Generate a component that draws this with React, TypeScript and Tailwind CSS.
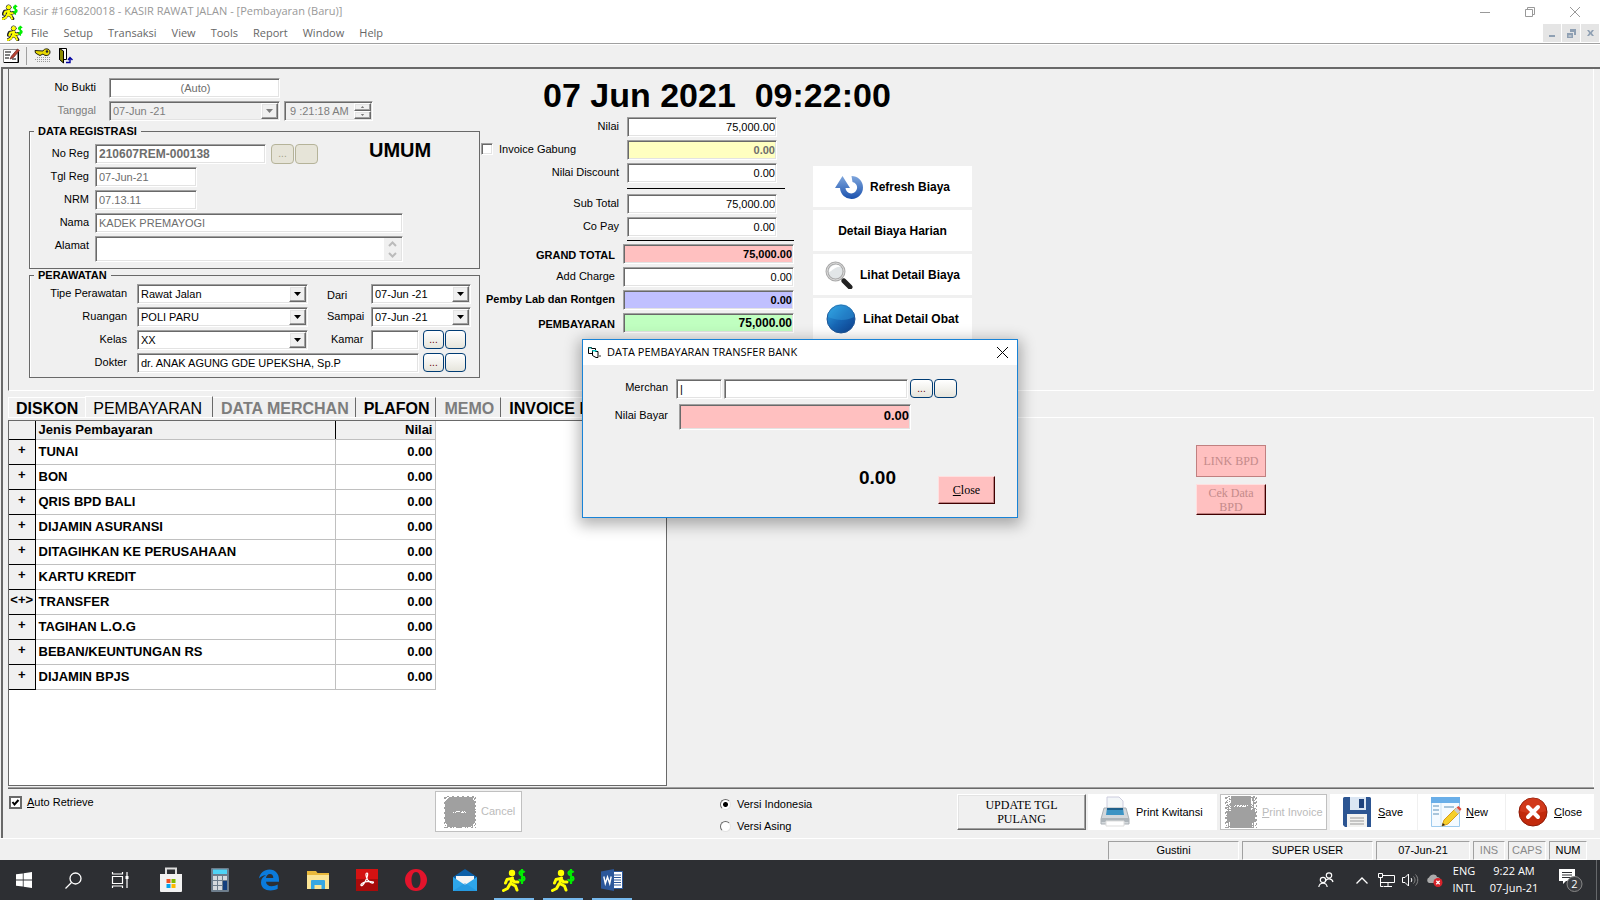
import type { ReactNode } from "react";

const SUNKEN =
  "border border-t-[#a0a0a0] border-l-[#a0a0a0] border-r-white border-b-white shadow-[inset_1px_1px_0_#696969,inset_-1px_-1px_0_#e3e3e3]";
const RAISED =
  "border border-t-white border-l-white border-r-[#696969] border-b-[#696969] shadow-[inset_-1px_-1px_0_#a0a0a0,inset_1px_1px_0_#e3e3e3] bg-[#f0f0f0]";
const XP =
  "h-[19px] rounded-[4px] border border-[#003c74] bg-gradient-to-b from-white to-[#e6e5dc] text-[10px] leading-4 text-[#600]";
const XP_OFF = "h-5 rounded-[4px] border border-[#b5b399] bg-[#e6e4d8] text-[10px] leading-4 text-[#a19f88]";

type FieldProps = { id: string; value?: string; className?: string; disabled?: boolean; label?: string };

function Field({ id, value = "", className = "", disabled, label }: FieldProps) {
  return (
    <input
      id={id}
      aria-label={label}
      defaultValue={value}
      disabled={disabled}
      className={`h-5 min-w-0 pl-[3px] pr-px outline-none disabled:text-[#6d6d6d] ${SUNKEN} ${className}`}
    />
  );
}

function Arrow({ up, className = "" }: { up?: boolean; className?: string }) {
  return (
    <svg viewBox="0 0 7 4" className={`h-1 w-[7px] ${className}`} fill="currentColor">
      <path d={up ? "M0 4h7L3.5 0z" : "M0 0h7L3.5 4z"} />
    </svg>
  );
}

function Combo({ id, value }: { id: string; value: string }) {
  return (
    <div className={`flex h-5 w-[171px] items-center bg-white p-px ${SUNKEN}`}>
      <select id={id} className="min-w-0 flex-1 appearance-none px-[2px] outline-none">
        <option>{value}</option>
      </select>
      <span className={`flex h-4 w-[17px] items-center justify-center ${RAISED}`}>
        <Arrow />
      </span>
    </div>
  );
}

function DatePick({ id, value, className, disabled }: FieldProps) {
  return (
    <div className={`flex h-5 items-center p-px ${SUNKEN} ${disabled ? "text-[#7d7d7d]" : "bg-white"} ${className}`}>
      <input id={id} defaultValue={value} disabled={disabled} className="min-w-0 flex-1 px-[2px] outline-none" />
      <button aria-label="Pilih tanggal" disabled={disabled} className={`flex h-4 w-[17px] items-center justify-center ${RAISED}`}>
        <Arrow />
      </button>
    </div>
  );
}

function Row({ id, label, width, gap, children, className = "" }: { id: string; label: string; width: string; gap: string; children: ReactNode; className?: string }) {
  return (
    <div className={`flex items-start ${gap}`}>
      <label htmlFor={id} className={`shrink-0 text-right leading-[18px] ${width} ${className}`}>
        {label}
      </label>
      {children}
    </div>
  );
}

function Runner({ className = "", outline = false }: { className?: string; outline?: boolean }) {
  return (
    <svg viewBox="0 0 24 24" className={className}>
      {outline && (
        <g stroke="#222" fill="none" strokeLinecap="round" strokeLinejoin="round">
          <circle cx="10" cy="5" r="3.6" strokeWidth="1.4" />
          <path d="M10 10 8 16M9.500 10.500 4 11 2 15M10 11l3 3 4-1M8 15l5 2.500 3 4.500M8 16l-3 4-4 2.500" strokeWidth="5" />
        </g>
      )}
      <circle cx="10" cy="5" r="3.200" fill="#ff0" />
      <path
        d="M10.500 10 8.500 16M9.500 10.500 5 11.500 3.500 15M10 11l2.500 3h3.500M8.500 15.500l5 2.500 1.500 4M8 16l-2.500 4.500L1.500 22.500"
        fill="none"
        stroke="#ff0"
        strokeWidth="3"
        strokeLinecap="round"
        strokeLinejoin="round"
      />
      <path d="M22.500 4.500c-1-2-5-2-5 .8 0 3 5 2 5 5 0 3-4.500 3-5.500.8M20 1v15" fill="none" stroke="#0e0" strokeWidth="2.200" />
    </svg>
  );
}

/* Disabled pictures are drawn as a grey silhouette with dithered edges. */
function Dither({ printer = false }: { printer?: boolean }) {
  const specks: ReactNode[] = [];
  for (let y = 0; y < 32; y++) {
    for (let x = 0; x < 32; x++) {
      const n = (x * 73 + y * 151 + x * y * 29 + ((x * x) ^ (y * 7))) % 10;
      const dx = Math.abs(x - 15.5);
      const dy = Math.abs(y - 15.5);
      const edge = printer ? (dx > 10 && y < 15) || dx > 14 || (dx > 11 && y > 25) : Math.hypot(dx, dy) > 18 || dx > 14.6 || dy > 14.6;
      const face = printer ? y > 8 && y < 11 && dx < 7 : y > 14 && y < 17 && dx < 7;
      if ((edge && n < 5) || (face && n < 3)) specks.push(<rect key={`${x}-${y}`} x={x} y={y} width="1" height="1" fill="#fff" />);
    }
  }
  return (
    <svg viewBox="0 0 32 32" className="size-8 shrink-0" shapeRendering="crispEdges">
      <rect width="32" height="32" fill="#a0a0a0" />
      {specks}
    </svg>
  );
}

function RefreshIcon() {
  return (
    <svg viewBox="0 0 28 24" className="h-6 w-7">
      <defs>
        <linearGradient id="rf" x1="0" y1="0" x2="0" y2="1">
          <stop offset="0" stopColor="#7fa6dc" />
          <stop offset="1" stopColor="#1a51ae" />
        </linearGradient>
      </defs>
      <path d="M16.500 1a11.500 11.500 0 1 1-11.500 12H0L7.500 1 15 13h-4.500a5.800 5.800 0 1 0 7-6z" fill="url(#rf)" />
    </svg>
  );
}

function MagnifierIcon() {
  return (
    <svg viewBox="0 0 28 28" className="size-7">
      <path d="m16 17 3 3" stroke="#999" strokeWidth="3" />
      <path d="m19 20 6 6" stroke="#222" strokeWidth="5" strokeLinecap="round" />
      <circle cx="10.500" cy="10.500" r="8.500" fill="#e2e6e8" stroke="#aaa" strokeWidth="3" />
      <circle cx="10.500" cy="10.500" r="8.500" fill="none" stroke="#ddd" strokeWidth="1" />
      <path d="M4 11c4-1 6-6 12-5a7 7 0 0 0-12 5z" fill="#fff" />
    </svg>
  );
}

function BallIcon() {
  return (
    <svg viewBox="0 0 30 30" className="size-[30px]">
      <defs>
        <linearGradient id="ball" x1="0" y1="0" x2="1" y2="1">
          <stop offset="0" stopColor="#2fa4e2" />
          <stop offset=".5" stopColor="#1766b4" />
          <stop offset="1" stopColor="#0d3f8c" />
        </linearGradient>
      </defs>
      <circle cx="15" cy="15" r="14" fill="url(#ball)" stroke="#1d5596" />
      <path d="M2 13a13 13 0 0 1 26 0c-8 4-16 4-26 0z" fill="#39b0ea" opacity=".35" />
    </svg>
  );
}

function PrinterIcon() {
  return (
    <svg viewBox="0 0 30 32" className="h-8 w-[30px]">
      <path d="M7 1h12l4 4v10H7z" fill="#f3f6f8" stroke="#ccd" />
      <path d="M4 12h22l3 11v5H1v-5z" fill="#d3d8dc" stroke="#aab0b5" />
      <path d="M7 12h16l1 7H6z" fill="#3d94c4" />
      <path d="M7 12h16v2H7z" fill="#1d5f8a" />
      <path d="M1 22h28v4H1z" fill="#aeb5ba" />
      <path d="M6 25h18v5H6z" fill="#fff" stroke="#ddd" />
    </svg>
  );
}

function FloppyIcon() {
  return (
    <svg viewBox="0 0 30 32" className="h-8 w-[30px]">
      <path d="M1 2.500A1.500 1.500 0 0 1 2.500 1h25A1.500 1.500 0 0 1 29 2.500V31H3l-2-2z" fill="#2c5592" />
      <path d="M8 1h16v13H8z" fill="#dbe6f3" />
      <path d="M17 3h5v9h-5z" fill="#1e427c" />
      <path d="M5 18h20v13H5z" fill="#f2f2f0" />
      <path d="M8 22h14M8 25h14M8 28h14" stroke="#999" />
    </svg>
  );
}

function NoteIcon() {
  return (
    <svg viewBox="0 0 32 32" className="size-8">
      <path d="M1.500 2.500h28v28h-28z" fill="#f4faff" stroke="#9ecbee" />
      <path d="M1 1h29v6H1z" fill="#69aee8" />
      <path d="M11 7v23" stroke="#cfe3f2" />
      <path d="M3 10h6M3 14h6M3 18h6M14 11h10" stroke="#8fb4d0" strokeWidth="1.500" />
      <path d="m12 30 2-6L26 12l4 4-12 12z" fill="#f6cf2a" stroke="#d79b1a" />
      <path d="m24 14 2.500-2.500 4 4L28 18z" fill="#ccc" />
      <path d="m26.500 11.500 2-1.500 3 3-1.500 2z" fill="#e04a3a" />
      <path d="m12 30 .8-3 2.200 2z" fill="#222" />
    </svg>
  );
}

function CloseIcon() {
  return (
    <svg viewBox="0 0 30 30" className="size-[30px]">
      <circle cx="15" cy="15" r="14" fill="#c22a0c" stroke="#8d1a06" />
      <path d="M2 14a13 13 0 0 1 26 0c-9 3-17 3-26 0z" fill="#e0482a" opacity=".5" />
      <path d="m10 10 10 10M20 10 10 20" stroke="#fff" strokeWidth="4" strokeLinecap="round" />
    </svg>
  );
}

const PAYMENTS = ["TUNAI", "BON", "QRIS BPD BALI", "DIJAMIN ASURANSI", "DITAGIHKAN KE PERUSAHAAN", "KARTU KREDIT", "TRANSFER", "TAGIHAN L.O.G", "BEBAN/KEUNTUNGAN RS", "DIJAMIN BPJS"];

function TitleBars() {
  return (
    <header className="bg-white font-['Open_Sans',sans-serif] text-[11px]">
      <div className="flex h-[23px] items-center text-[#999]">
        <Runner outline className="ml-0.5 size-4" />
        <h1 className="ml-[5px]">Kasir #160820018 - KASIR RAWAT JALAN - [Pembayaran (Baru)]</h1>
        <div className="ml-auto flex h-5 items-center gap-[35px] pr-5">
          <button aria-label="Minimize"><svg viewBox="0 0 10 10" className="size-2.5"><path d="M0 5.500h10" stroke="#999" /></svg></button>
          <button aria-label="Restore"><svg viewBox="0 0 10 10" className="size-2.5" fill="none" stroke="#999"><path d="M.5 2.500h7v7h-7zM2.500 2.500v-2h7v7h-2" /></svg></button>
          <button aria-label="Close"><svg viewBox="0 0 10 10" className="size-2.5" stroke="#999"><path d="m0 0 10 10M10 0 0 10" /></svg></button>
        </div>
      </div>
      <div className="flex h-[21px] items-center border-b border-[#a0a0a0] text-[#666]">
        <Runner outline className="ml-[7px] size-4" />
        <nav className="ml-2 flex gap-[15px]">
          {["File", "Setup", "Transaksi", "View", "Tools", "Report", "Window", "Help"].map((m) => (
            <button key={m}>{m}</button>
          ))}
        </nav>
        <div className="ml-auto flex gap-px pr-px">
          {["M5 10h6v2H5z", "M7 4h6v6h-2V7H7zM4 8h6v5H4zm1.500 2.500v1h3v-1z", "m5 5 2 0 1.500 2L10 5h2L9.800 8l2.200 3h-2L8.500 9.300 7 11H5l2.200-3z"].map((d, i) => (
            <button key={d} aria-label={["Minimize form", "Restore form", "Close form"][i]} className="flex h-[18px] w-[18px] items-center justify-center bg-[#e5e5e5]">
              <svg viewBox="0 0 17 17" className="size-[17px]" fill="#8fa0b3" fillRule="evenodd"><path d={d} /></svg>
            </button>
          ))}
        </div>
      </div>
    </header>
  );
}

function ToolBar() {
  return (
    <div className="flex h-[23px] items-center border-t border-white pb-px pl-[3px]">
      <button aria-label="Edit">
        <svg viewBox="0 0 17 17" className="size-[17px]">
          <path d="M.5 2.500h14v13H.5z" fill="#fff" stroke="#888" />
          <path d="M1 15.500h14.500V3" stroke="#000" fill="none" />
          <path d="M2 5h6M2 8h5M2 11h4M9 12h4" stroke="#000" />
          <path d="m7 12 1.500-3 6-7 2 1.500-6 7z" fill="#b43" stroke="#622" strokeWidth=".7" />
        </svg>
      </button>
      <span className="ml-[6px] h-[18px] w-px bg-[#a0a0a0]" />
      <button aria-label="Kunci" className="ml-[7px]">
        <svg viewBox="0 0 17 17" className="size-[17px]">
          <path d="M3 10.500h13M1 12.500h15M3 14.500h13" stroke="#999" strokeDasharray="1 1" />
          <path d="M1 3.500 9 4c1-3 7-3 7 1s-5 4.500-7 2L6 8.500 4 7.500 1.500 6z" fill="#e8d800" stroke="#221" />
          <circle cx="13" cy="4.500" r="1.200" fill="#222" />
        </svg>
      </button>
      <button aria-label="Keluar" className="ml-[7px]">
        <svg viewBox="0 0 16 17" className="h-[17px] w-4">
          <path d="M1.500 1.500h7v11h-7z" fill="#fff" stroke="#000" />
          <path d="M1.500 1.500 5.500 4v12l-4-3.500z" fill="#8a8a00" stroke="#000" />
          <path d="M8 15.500h4V12M10 13l2-2.500 2.500 2.500" stroke="#0000a0" fill="none" strokeWidth="1.400" />
        </svg>
      </button>
    </div>
  );
}

function Registration() {
  const L = "w-[59px]";
  const P = "w-[97px]";
  return (
    <section className="flex w-[472px] shrink-0 flex-col pl-5 pr-px pt-[9px]">
      <div className="flex flex-col gap-[3px]">
        <Row id="bukti" label="No Bukti" width="w-[67px]" gap="gap-[13px]">
          <Field id="bukti" value="(Auto)" disabled className="w-[171px] bg-white text-center" />
        </Row>
        <Row id="tgl" label="Tanggal" width="w-[67px]" gap="gap-[13px]" className="text-[#7d7d7d]">
          <div className="flex gap-1">
            <DatePick id="tgl" value="07-Jun -21" disabled className="w-[171px]" />
            <div className={`flex h-5 w-[89px] items-center p-px text-[#7d7d7d] ${SUNKEN}`}>
              <input aria-label="Jam" disabled defaultValue="9 :21:18 AM" className="min-w-0 flex-1 pl-1 outline-none" />
              <span className="flex flex-col">
                <button aria-label="Naik" disabled className={`flex h-2 w-[17px] items-center justify-center ${RAISED}`}><Arrow up className="scale-50" /></button>
                <button aria-label="Turun" disabled className={`flex h-2 w-[17px] items-center justify-center ${RAISED}`}><Arrow className="scale-50" /></button>
              </span>
            </div>
          </div>
        </Row>
      </div>

      <fieldset className="mt-1 border border-[#696969] pb-1.5 shadow-[inset_1px_0_0_#fff]">
        <legend className="ml-1 px-1 text-[11px] font-bold leading-3">DATA REGISTRASI</legend>
        <div className="flex flex-col gap-[3px] pt-[7px]">
          <Row id="noreg" label="No Reg" width={L} gap="gap-1.5">
            <div className="flex items-start">
              <Field id="noreg" value="210607REM-000138" disabled className="w-[171px] bg-white text-[12px] font-bold" />
              <button disabled className={`ml-[5px] w-[23px] ${XP_OFF}`}>...</button>
              <button disabled aria-label="Kosongkan" className={`ml-px w-[23px] ${XP_OFF}`} />
              <strong className="ml-[51px] text-[20px] leading-3">UMUM</strong>
            </div>
          </Row>
          <Row id="tglreg" label="Tgl Reg" width={L} gap="gap-1.5">
            <Field id="tglreg" value="07-Jun-21" disabled className="w-[102px] bg-white" />
          </Row>
          <Row id="nrm" label="NRM" width={L} gap="gap-1.5">
            <Field id="nrm" value="07.13.11" disabled className="w-[102px] bg-white" />
          </Row>
          <Row id="nama" label="Nama" width={L} gap="gap-1.5">
            <Field id="nama" value="KADEK PREMAYOGI" disabled className="w-[308px] bg-white" />
          </Row>
          <Row id="alamat" label="Alamat" width={L} gap="gap-1.5">
            <div className={`flex h-[26px] w-[308px] bg-white p-px ${SUNKEN}`}>
              <textarea id="alamat" disabled className="min-w-0 flex-1 resize-none overflow-hidden" />
              <svg viewBox="0 0 17 22" className="w-[17px] bg-[#f0f0f0]" fill="none" stroke="#bbb" strokeWidth="2"><path d="m5 8 3.500-3.500L12 8M5 15l3.500 3.500L12 15" /></svg>
            </div>
          </Row>
        </div>
      </fieldset>

      <fieldset className="border border-[#696969] pb-1 shadow-[inset_1px_0_0_#fff]">
        <legend className="ml-1 px-1 text-[11px] font-bold leading-3">PERAWATAN</legend>
        <div className="flex flex-col gap-[3px] pt-[3px]">
          <Row id="tipe" label="Tipe Perawatan" width={P} gap="gap-2.5">
            <Combo id="tipe" value="Rawat Jalan" />
            <label htmlFor="dari" className="ml-[9px] w-[34px] pt-0.5 leading-[18px]">Dari</label>
            <DatePick id="dari" value="07-Jun -21" className="w-[100px]" />
          </Row>
          <Row id="ruang" label="Ruangan" width={P} gap="gap-2.5">
            <Combo id="ruang" value="POLI PARU" />
            <label htmlFor="sampai" className="ml-[9px] w-[34px] leading-[18px]">Sampai</label>
            <DatePick id="sampai" value="07-Jun -21" className="w-[100px]" />
          </Row>
          <Row id="kelas" label="Kelas" width={P} gap="gap-2.5">
            <Combo id="kelas" value="XX" />
            <label htmlFor="kamar" className="ml-[9px] w-[34px] pl-1 leading-[18px]">Kamar</label>
            <div className="flex">
              <Field id="kamar" className="w-12 bg-white" />
              <button className={`ml-1 w-[21px] ${XP}`}>...</button>
              <button aria-label="Kosongkan kamar" className={`ml-px w-[21px] ${XP}`} />
            </div>
          </Row>
          <Row id="dokter" label="Dokter" width={P} gap="gap-2.5">
            <div className="flex">
              <Field id="dokter" value="dr. ANAK AGUNG GDE UPEKSHA, Sp.P" className="w-[282px] bg-white" />
              <button className={`ml-1 w-[21px] ${XP}`}>...</button>
              <button aria-label="Kosongkan dokter" className={`ml-px w-[21px] ${XP}`} />
            </div>
          </Row>
        </div>
      </fieldset>
    </section>
  );
}

function Totals() {
  const A = "w-[138px]";
  const AF = "w-[150px] text-right";
  const B = "w-[134px]";
  const BF = "w-[171px] text-right";
  return (
    <section className="flex w-[313px] shrink-0 flex-col">
      <div className="flex flex-col gap-[3px]">
        <Row id="nilai" label="Nilai" width={A} gap="gap-2"><Field id="nilai" value="75,000.00" className={`bg-white ${AF}`} /></Row>
        <div className="flex items-start gap-2">
          <label className="flex w-[138px] items-center gap-1.5 leading-[18px]">
            <input type="checkbox" className={`size-3 appearance-none bg-white ${SUNKEN}`} />
            Invoice Gabung
          </label>
          <Field id="gabung" label="Nilai invoice gabung" value="0.00" disabled className={`bg-[#ffffc0] font-bold ${AF}`} />
        </div>
        <Row id="disc" label="Nilai Discount" width={A} gap="gap-2"><Field id="disc" value="0.00" className={`bg-white ${AF}`} /></Row>
      </div>
      <hr className="ml-[146px] mt-[5px] w-[158px] border-black" />
      <div className="mt-[5px] flex flex-col gap-[3px]">
        <Row id="sub" label="Sub Total" width={A} gap="gap-2"><Field id="sub" value="75,000.00" className={`bg-white ${AF}`} /></Row>
        <Row id="copay" label="Co Pay" width={A} gap="gap-2"><Field id="copay" value="0.00" className={`bg-white ${AF}`} /></Row>
      </div>
      <hr className="ml-[146px] mt-[3px] border-black" />
      <div className="mt-[3px] flex flex-col gap-[3px]">
        <Row id="grand" label="GRAND TOTAL" width={B} gap="gap-2" className="pt-0.5 font-bold"><Field id="grand" value="75,000.00" className={`bg-[#ffc0c0] font-bold ${BF}`} /></Row>
        <Row id="add" label="Add Charge" width={B} gap="gap-2"><Field id="add" value="0.00" className={`bg-white ${BF}`} /></Row>
        <Row id="lab" label="Pemby Lab dan Rontgen" width={B} gap="gap-2" className="whitespace-nowrap font-bold"><Field id="lab" value="0.00" className={`bg-[#c0c0ff] font-bold ${BF}`} /></Row>
        <Row id="bayar" label="PEMBAYARAN" width={B} gap="gap-2" className="pt-0.5 font-bold"><Field id="bayar" value="75,000.00" className={`bg-[#c0ffc0] text-[12px] font-bold ${BF}`} /></Row>
      </div>
    </section>
  );
}

function PaymentTabs() {
  const tab = "border-r border-t border-r-[#696969] border-t-white pl-2 pr-1.5 pt-[3px] text-[16px] font-bold leading-4";
  return (
    <section className="flex flex-1 flex-col">
      <div role="tablist" className="mt-1.5 flex h-5 items-end whitespace-nowrap">
        <button role="tab" className="border-l border-t border-white px-[7px] pt-[3px] text-[16px] font-bold leading-4">DISKON</button>
        <button role="tab" aria-selected className="border-l border-r border-t border-l-white border-r-[#696969] border-t-white pl-[7px] pr-2.5 pt-1 text-[16px] leading-4">PEMBAYARAN</button>
        <button role="tab" disabled className={`${tab} text-[#7d7d7d]`}>DATA MERCHAN</button>
        <button role="tab" className={tab}>PLAFON</button>
        <button role="tab" disabled className={`${tab} text-[#7d7d7d]`}>MEMO</button>
        <button role="tab" className={tab}>INVOICE K</button>
      </div>
      <div className="flex flex-1 border-r border-t border-white pb-0.5 pt-0.5">
        <div className="w-[659px] shrink-0 border border-[#696969] bg-white">
          <table className="border-collapse text-[13px] font-bold">
            <thead>
              <tr className="h-[18px] bg-[#f0f0f0]">
                <th aria-label="Pilih" className="w-[26px] border-b border-r border-black p-0" />
                <th className="w-[300px] border-b border-r border-b-[#c0c0c0] border-r-black p-0 pl-[3px] text-left leading-[17px]">Jenis Pembayaran</th>
                <th className="w-[100px] border-b border-r border-[#c0c0c0] p-0 pr-[2px] text-right leading-[17px]">Nilai</th>
              </tr>
            </thead>
            <tbody>
              {PAYMENTS.map((p) => (
                <tr key={p} className="h-[25px]">
                  <td className="border-b border-r border-black bg-[#f0f0f0] p-0 pb-1 text-center leading-5">{p === "TRANSFER" ? "<+>" : "+"}</td>
                  <td className="border-b border-r border-[#c0c0c0] p-0 pl-[3px] leading-6">{p}</td>
                  <td className="border-b border-r border-[#c0c0c0] p-0 pr-[2px] text-right leading-6">0.00</td>
                </tr>
              ))}
            </tbody>
          </table>
        </div>
        <div className="flex flex-1 flex-col items-end gap-[7px] pr-[327px] pt-[25px] font-['Liberation_Serif',serif] text-[12px] leading-[14px] text-[#c48a8a] [text-shadow:1px_1px_0_#fff]">
          <button disabled className="h-8 w-[70px] border border-[#c08080] bg-[#ffc0c0]">LINK BPD</button>
          <button disabled className="h-[31px] w-[70px] border border-b-[#400000] border-l-[#ffe0e0] border-r-[#400000] border-t-[#ffe0e0] bg-[#ffc0c0] shadow-[inset_-1px_-1px_0_#c08080]">
            Cek Data<br />BPD
          </button>
        </div>
      </div>
    </section>
  );
}

function Radio({ label, on }: { label: string; on?: boolean }) {
  return (
    <label className="flex items-center gap-1.5">
      <input
        type="radio"
        name="versi"
        defaultChecked={on}
        className="size-[11px] appearance-none rounded-full border border-b-[#e3e3e3] border-l-[#696969] border-r-[#e3e3e3] border-t-[#696969] bg-white checked:bg-[radial-gradient(circle,#000_2px,#fff_3px)]"
      />
      {label}
    </label>
  );
}

function ActionBar() {
  const act = "flex h-9 items-center bg-white text-[11px]";
  return (
    <footer className="flex h-[50px] items-start border-t border-[#696969] shadow-[0_-1px_0_#a0a0a0]">
      <label className="flex w-[427px] shrink-0 items-center gap-[5px] pl-px pt-[5px]">
        <span className="grid">
          <input type="checkbox" defaultChecked className="peer col-start-1 row-start-1 size-[13px] appearance-none border-2 border-[#696969] bg-white" />
          <svg viewBox="0 0 13 13" className="pointer-events-none invisible col-start-1 row-start-1 size-[13px] peer-checked:visible">
            <path d="m3.500 6 2 2.500 4-4.500" fill="none" stroke="#000" strokeWidth="2" />
          </svg>
        </span>
        <span><u>A</u>uto Retrieve</span>
      </label>
      <button disabled className="mt-0.5 flex h-[41px] w-[87px] shrink-0 items-center gap-[5px] border border-[#c0c0c0] bg-white pl-2 text-[#bbb]">
        <Dither />
        Cancel
      </button>
      <div className="ml-[198px] flex flex-col gap-[5px] pt-[7px] leading-[17px]">
        <Radio label="Versi Indonesia" on />
        <Radio label="Versi Asing" />
      </div>
      <div className="ml-auto flex pt-[5px]">
        <button className={`mr-0.5 h-9 w-[129px] font-['Liberation_Serif',serif] text-[12px] leading-[14px] ${RAISED}`}>UPDATE TGL<br />PULANG</button>
        <button className={`${act} w-[129px] gap-1.5 pl-3`}><PrinterIcon />Print Kwitansi</button>
        <button disabled className={`${act} mx-[3px] w-[107px] gap-[5px] border border-[#c0c0c0] pl-1 text-[#bbb]`}><Dither printer /><span><u>P</u>rint Invoice</span></button>
        <button className={`${act} mr-px w-[87px] gap-1.5 pl-3`}><FloppyIcon /><span><u>S</u>ave</span></button>
        <button className={`${act} mr-px w-[87px] gap-1 pl-3`}><NoteIcon /><span><u>N</u>ew</span></button>
        <button className={`${act} w-[88px] gap-1.5 pl-3`}><CloseIcon /><span><u>C</u>lose</span></button>
      </div>
    </footer>
  );
}

function StatusBar() {
  const cell = "flex items-center justify-center border border-b-white border-l-[#a0a0a0] border-r-white border-t-[#a0a0a0]";
  return (
    <div className="flex h-[22px] justify-end gap-[3px] border-t border-white pr-[13px] pt-0.5 text-[11px]">
      <span className={`${cell} w-[131px]`}>Gustini</span>
      <span className={`${cell} w-[131px]`}>SUPER USER</span>
      <span className={`${cell} w-[94px]`}>07-Jun-21</span>
      <span className={`${cell} w-8 text-[#888]`}>INS</span>
      <span className={`${cell} w-[38px] text-[#888]`}>CAPS</span>
      <span className={`${cell} w-[38px]`}>NUM</span>
    </div>
  );
}

function TaskButton({ name, children, running }: { name: string; children: ReactNode; running?: boolean }) {
  return (
    <button aria-label={name} className="mr-px flex h-10 w-12 justify-center">
      <span className={`flex w-10 items-center justify-center border-b-2 pt-0.5 ${running ? "border-[#76b9ed]" : "border-transparent"}`}>{children}</span>
    </button>
  );
}

function TaskBar() {
  return (
    <div className="flex h-10 items-center bg-[#2d2f33] font-['Open_Sans',sans-serif] text-[12px] text-white">
      <TaskButton name="Start"><svg viewBox="0 0 16 16" className="size-4" fill="#fff"><path d="M0 2.300 6.800 1.400v6.200H0zM7.600 1.300 16 0v7.600H7.600zM0 8.400h6.800v6.200L0 13.700zM7.600 8.400H16V16l-8.400-1.300z" /></svg></TaskButton>
      <TaskButton name="Search"><svg viewBox="0 0 17 17" className="size-[17px]" fill="none" stroke="#fff" strokeWidth="1.300"><circle cx="10.500" cy="6.500" r="5.500" /><path d="m6.500 10.500-6 6" /></svg></TaskButton>
      <TaskButton name="Task view"><svg viewBox="0 0 20 16" className="mr-1 h-4 w-5" fill="none" stroke="#fff" strokeWidth="1.200"><path d="M2.500 4.500h10v7h-10zM2.500 0v2h10V0M2.500 16v-2h10v2M17 0v16" /><path d="M15.500 5.500h3" strokeWidth="3" /></svg></TaskButton>
      <TaskButton name="Store"><svg viewBox="0 0 24 26" className="h-[26px] w-6"><path d="M7 8V1.500h10V8" fill="none" stroke="#ddd" strokeWidth="2" /><path d="M1 7h22v17a1 1 0 0 1-1 1H2a1 1 0 0 1-1-1z" fill="#f2f2f2" /><path d="M7.500 12h4v4h-4z" fill="#f25022" /><path d="M12.500 12h4v4h-4z" fill="#7fba00" /><path d="M7.500 17h4v4h-4z" fill="#00a4ef" /><path d="M12.500 17h4v4h-4z" fill="#ffb900" /></svg></TaskButton>
      <TaskButton name="Calculator"><svg viewBox="0 0 18 24" className="h-6 w-[18px]"><rect width="18" height="24" rx="1" fill="#6d7d8c" /><path d="M2 1.500h14V6H2z" fill="#4fd3f5" /><path d="M2 8h4v4H2zM7 8h4v4H7zM12 8h4v4h-4zM2 13h4v4H2zM7 13h4v4H7zM2 18h4v4H2zM7 18h4v4H7z" fill="#d5dade" /><path d="M12 13h4v9h-4z" fill="#123f7e" /></svg></TaskButton>
      <TaskButton name="Edge"><svg viewBox="0 0 22 22" className="size-[22px]"><path d="M1 9.500C2 4 6 .5 11.500.5 17.500.5 21 5 21 10.500v2.300H8c.2 3 2.600 4.400 5.500 4.400 2.400 0 4.300-.6 6.200-1.700v4.300c-2 1.100-4.500 1.700-7.200 1.700C7 21.500 3 18.500 3 13.500c0-3.500 1.900-6 5-7.300C5.300 6 2.800 7.500 1 9.500zm7-.5h7.300c0-2.400-1.200-4-3.400-4C9.800 5 8.300 6.700 8 9z" fill="#0b7bdc" /></svg></TaskButton>
      <TaskButton name="Explorer"><svg viewBox="0 0 22 20" className="h-5 w-[22px]"><path d="M0 1h9l1.500 2H22v16H0z" fill="#e9b93c" /><path d="M0 5h22v14H0z" fill="#fbe596" /><path d="M4 19v-8a1 1 0 0 1 1-1h12a1 1 0 0 1 1 1v8h-3.500v-4h-7v4z" fill="#36a7e3" /></svg></TaskButton>
      <TaskButton name="Acrobat"><svg viewBox="0 0 22 22" className="size-[22px]"><path d="M0 0h22v22H0z" fill="#a90b0b" /><path d="M0 0h22v10H0z" fill="#d41212" /><path d="M11 4c-1.800 0-1 4 .6 6.800 1.300 2.300 4.600 4 5.800 3 .9-1.500-5-1.700-8-1-2.500.6-5.300 2.600-4.300 3.700 1.300 1 4-3.200 5.200-6.200C11.200 8 12.500 4 11 4z" fill="none" stroke="#fff" strokeWidth="1.200" /></svg></TaskButton>
      <TaskButton name="Opera"><svg viewBox="0 0 22 22" className="size-[22px]"><path fillRule="evenodd" d="M11 0a11 11 0 1 0 0 22 11 11 0 0 0 0-22zm0 3c2.800 0 4.500 3.500 4.500 8s-1.700 8-4.500 8-4.500-3.500-4.500-8S8.200 3 11 3z" fill="#e3142c" /></svg></TaskButton>
      <TaskButton name="Mail"><svg viewBox="0 0 24 22" className="h-[22px] w-6"><path d="M0 8 12 0l12 8v3H0z" fill="#0b5fa8" /><path d="M3 7h18v9H3z" fill="#f4f4f4" /><path d="M0 8l12 8 12-8v14H0z" fill="#2ea6ea" /><path d="m0 22 12-8 12 8z" fill="#1c8ed8" opacity=".5" /></svg></TaskButton>
      <TaskButton name="Kasir" running><Runner className="size-6" /></TaskButton>
      <TaskButton name="Kasir 2" running><Runner className="size-6" /></TaskButton>
      <TaskButton name="Word" running>
        <svg viewBox="0 0 22 22" className="size-[22px]"><path d="M11 2.500h10.500v17H11z" fill="#fff" stroke="#2b579a" /><path d="M13 6h7M13 8.500h7M13 11h7M13 13.500h7M13 16h7" stroke="#2b579a" /><path d="m0 2.500 13-2.500v22L0 19.500z" fill="#2b579a" /><path d="m2.800 7.500 1.500 7 2.200-6.500 2.200 6.500 1.500-7" fill="none" stroke="#fff" strokeWidth="1.400" /></svg>
      </TaskButton>
      <div className="ml-auto flex h-10 items-center">
        <svg viewBox="0 0 16 16" className="size-4" fill="none" stroke="#fff" strokeWidth="1.200"><circle cx="11" cy="3.500" r="2.700" /><path d="M7.500 9c1-3 6.500-3 7.500 1" /><circle cx="5" cy="8" r="2.700" /><path d="M.8 15c.7-5 7.700-5 8.400 0" /></svg>
        <svg viewBox="0 0 12 7" className="ml-[22px] h-[7px] w-3" fill="none" stroke="#fff" strokeWidth="1.300"><path d="m.5 6.500 5.500-5.500 5.500 5.500" /></svg>
        <svg viewBox="0 0 17 14" className="ml-[10px] h-3.5 w-[17px]" fill="none" stroke="#fff"><path d="M4.500 2.500h12v7H3M10 9.500v4M6 13.500h8M.5.500h4v4h-4zM2.500 4.500v9h3" /></svg>
        <svg viewBox="0 0 17 14" className="ml-[7px] h-3.5 w-[17px]" fill="none" stroke="#fff"><path d="M.5 4.500H3L6.500 1v12L3 9.500H.5zM9 5c1 1 1 3 0 4" /><path d="M11.500 3.500c2 2 2 5 0 7M13.500 1.500c3 3 3 8 0 11" stroke="#888" /></svg>
        <svg viewBox="0 0 17 14" className="ml-[7px] h-3.5 w-[17px]"><path d="M3 10a3 3 0 0 1 0-5.500C4.500 1 10 .5 11 4c3 0 4 3 3 6z" fill="#aaa" /><circle cx="12" cy="9.500" r="4.500" fill="#d8232a" /><path d="m10.300 7.800 3.400 3.400m0-3.400-3.400 3.400" stroke="#fff" strokeWidth="1.300" /></svg>
        <div className="ml-[7px] w-7 pb-0.5 text-center text-[11px] leading-[17px]">ENG<br />INTL</div>
        <div className="ml-1.5 w-[60px] pb-0.5 text-center text-[11px] leading-[17px]">9:22 AM<br />07-Jun-21</div>
        <svg viewBox="0 0 24 24" className="ml-[15px] mr-[13px] size-6"><path d="M0 1h16v12H7l-3 3v-3H0z" fill="#fff" /><path d="M3 4.500h10M3 7h10M3 9.500h10" stroke="#2d2f33" /><circle cx="15.500" cy="16" r="7.500" fill="#3b3d41" stroke="#888" /><text x="15.500" y="20" textAnchor="middle" fontSize="11" fill="#fff">2</text></svg>
        <span className="mr-[3px] h-10 w-px bg-[#66686b]" />
      </div>
    </div>
  );
}

function TransferDialog() {
  return (
    <div role="dialog" aria-label="DATA PEMBAYARAN TRANSFER BANK" className="absolute left-[582px] top-[339px] w-[436px] border border-[#1883d7] bg-[#f0f0f0] pb-[13px] shadow-[0_4px_14px_3px_rgba(0,0,0,0.3)]">
      <div className="flex h-[25px] items-center bg-white px-[5px] font-['Open_Sans',sans-serif] text-[11px]">
        <svg viewBox="0 0 13 11" className="h-[11px] w-[13px]"><path d="M.5.500h3v1h4v5h-7z" fill="#fff" stroke="#000" /><path d="M.5.500h3v1H.5z" fill="#0cc" /><path d="M4.500 3.500h3v1h2.500v6H8L4.500 8.500z" fill="#fff" stroke="#000" /><path d="M4.500 3h4v1.500h-4z" fill="#0cc" /><path d="M11 8h2v2h-2z" fill="#999" /></svg>
        <h2 className="ml-1.5">DATA PEMBAYARAN TRANSFER BANK</h2>
        <button aria-label="Tutup" className="ml-auto mr-1"><svg viewBox="0 0 11 11" className="size-[11px]" stroke="#000"><path d="m0 0 11 11M11 0 0 11" /></svg></button>
      </div>
      <div className="flex items-start pt-3.5">
        <label htmlFor="merchan" className="w-[85px] text-right leading-4">Merchan</label>
        <Field id="merchan" value="|" className="ml-2 w-[46px] bg-white" />
        <Field id="merchan2" label="Nama merchan" className="ml-0.5 w-[184px] bg-white" />
        <button className={`ml-0.5 w-[23px] ${XP}`}>...</button>
        <button aria-label="Kosongkan merchan" className={`ml-px w-[23px] ${XP}`} />
      </div>
      <div className="flex pt-[5px]">
        <label htmlFor="nbayar" className="w-[85px] text-right leading-[22px]">Nilai Bayar</label>
        <div className={`ml-[11px] flex h-[26px] w-[232px] bg-[#ffc0c0] pl-[2px] pr-px ${SUNKEN}`}>
          <input id="nbayar" defaultValue="0.00" className="h-5 min-w-0 flex-1 text-right text-[13px] font-bold outline-none" />
        </div>
      </div>
      <div className="flex items-start justify-end pr-[22px] pt-[38px]">
        <strong className="mr-[42px] text-[19px] leading-5">0.00</strong>
        <button className="mt-2 h-7 w-[57px] border border-b-[#400000] border-l-[#ffe0e0] border-r-[#400000] border-t-[#ffe0e0] bg-[#ffc0c0] font-['Liberation_Serif',serif] text-[12px] shadow-[inset_-1px_-1px_0_#c08080]">
          <u>C</u>lose
        </button>
      </div>
    </div>
  );
}

export default function App() {
  return (
    <div className="relative flex min-h-screen flex-col bg-[#f0f0f0] font-['Liberation_Sans',Arial,sans-serif] text-[11px] text-black">
      <TitleBars />
      <ToolBar />
      <main className="ml-px flex flex-1 flex-col border-l-2 border-t-2 border-[#696969] pl-[5px] pr-[6px]">
        <div className="flex border-b border-l border-r border-b-white border-l-[#696969] border-r-white pb-3">
          <Registration />
          <div className="flex flex-col">
            <time className="h-[48px] whitespace-pre pl-[62px] pt-[9px] text-[34px] font-bold leading-[34px]">07 Jun 2021  09:22:00</time>
            <div className="flex">
              <Totals />
              <div className="ml-[19px] mt-[49px] flex w-[159px] flex-col gap-[3px] text-[12px] font-bold">
                <button className="flex h-[41px] items-center justify-center gap-[7px] bg-white"><RefreshIcon />Refresh Biaya</button>
                <button className="h-[41px] bg-white">Detail Biaya Harian</button>
                <button className="flex h-[41px] items-center justify-center gap-[7px] bg-white"><MagnifierIcon />Lihat Detail Biaya</button>
                <button className="flex h-[41px] items-center justify-center gap-[7px] bg-white"><BallIcon />Lihat Detail Obat</button>
              </div>
            </div>
          </div>
        </div>
        <PaymentTabs />
        <ActionBar />
      </main>
      <StatusBar />
      <TaskBar />
      <TransferDialog />
    </div>
  );
}
